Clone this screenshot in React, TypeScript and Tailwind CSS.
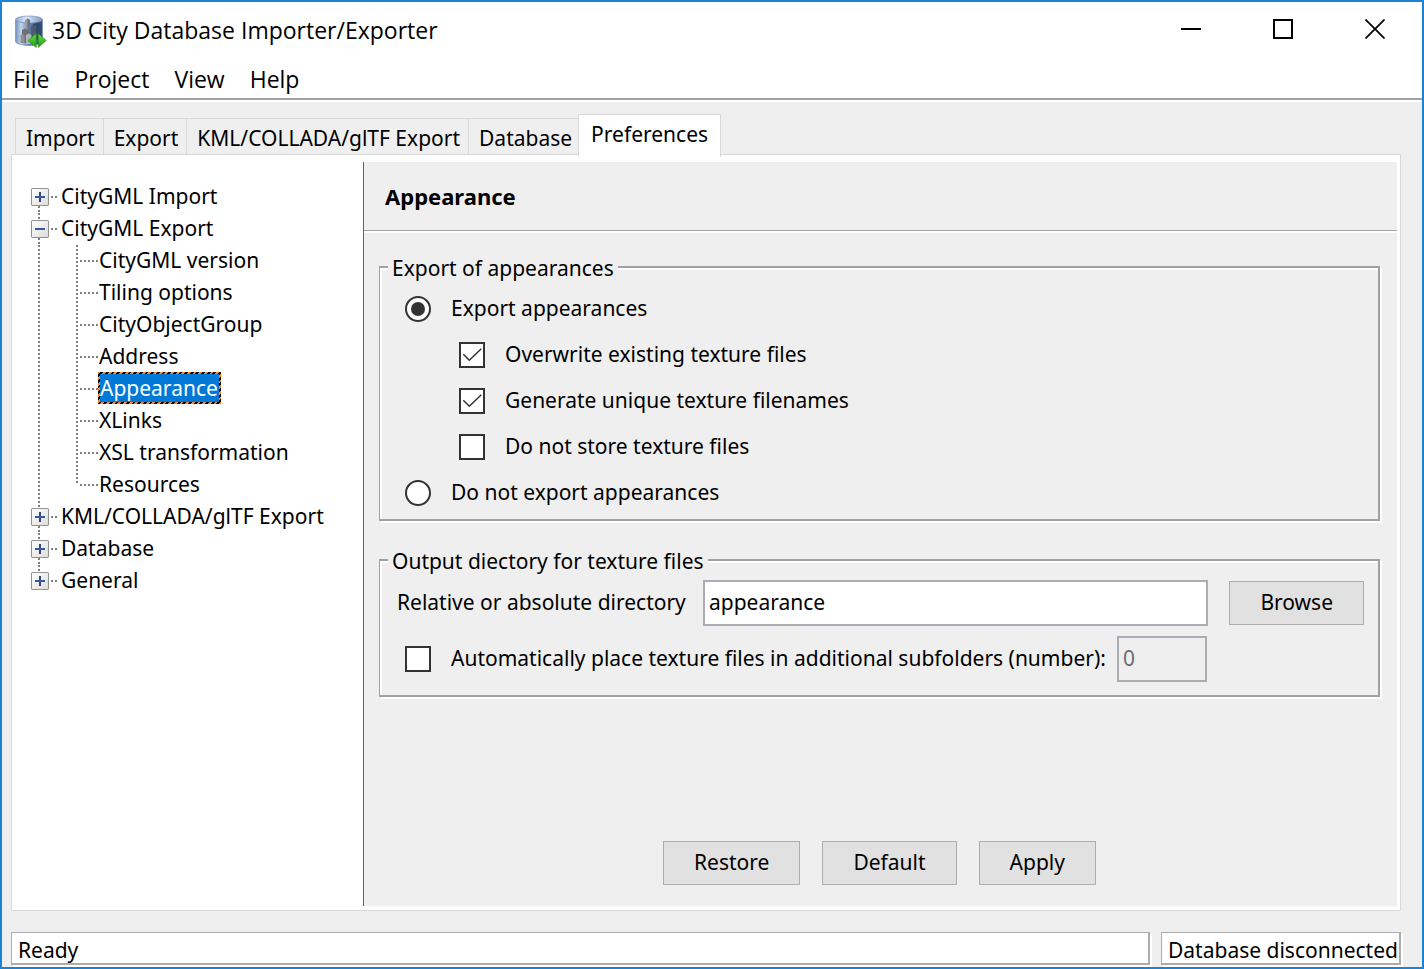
import { useState, type ReactNode } from "react";

const dotsY = "bg-[repeating-linear-gradient(to_bottom,#808080_0_2px,transparent_2px_4px)]";
const dotsX = "bg-[repeating-linear-gradient(to_right,#808080_0_2px,transparent_2px_4px)]";

function Logo() {
  return (
    <svg viewBox="0 0 33 33" className="size-[33px] shrink-0" aria-hidden="true">
      <defs>
        <linearGradient id="body" x1="0" x2="1" y1="0" y2="0">
          <stop offset="0" stopColor="#6f8fbd" />
          <stop offset="0.2" stopColor="#c3d3e8" />
          <stop offset="0.5" stopColor="#6283b3" />
          <stop offset="1" stopColor="#2c4d84" />
        </linearGradient>
        <linearGradient id="lid" x1="0" x2="1" y1="0" y2="0">
          <stop offset="0" stopColor="#8fa9cc" />
          <stop offset="0.4" stopColor="#dfe8f3" />
          <stop offset="1" stopColor="#7d99c2" />
        </linearGradient>
        <linearGradient id="arrow" x1="0" x2="0" y1="0" y2="1">
          <stop offset="0" stopColor="#6fdc45" />
          <stop offset="1" stopColor="#1d9a12" />
        </linearGradient>
      </defs>
      <path d="M1.500 4.500v22c0 2 6 4 13.500 4s13.500-2 13.500-4v-22z" fill="url(#body)" stroke="#7590b8" strokeWidth="0.700" />
      <ellipse cx="15" cy="4.500" rx="13.500" ry="3.500" fill="url(#lid)" stroke="#7590b8" strokeWidth="0.700" />
      <path d="M19 9l5-1.500 3 1.500v16h-8z" fill="#34496b" />
      <path d="M17 11l3-1 2 1v15h-5z" fill="#4b5a72" />
      <path d="M11 5l2.500-1.500L16 5v20h-5z" fill="#9a9da2" />
      <path d="M13.500 3.500L16 5v20h-2.500z" fill="#6d727a" />
      <path d="M8 15l3-1.500 3 1.500v13H8z" fill="#6b7079" />
      <path d="M6.500 20l2-1 2 1v8h-4z" fill="#8d9197" />
      <path d="M12 20l3-1.500 2.500 1.500v9H12z" fill="#b0b3b8" />
      <path d="M22.200 18.500v14L14 25.500z" fill="url(#arrow)" stroke="#198f10" strokeWidth="0.600" />
      <path d="M24.200 18.500v14l8.100-7z" fill="url(#arrow)" stroke="#198f10" strokeWidth="0.600" />
    </svg>
  );
}

function WindowButton({ label, children }: { label: string; children: ReactNode }) {
  return (
    <button type="button" aria-label={label} className="flex h-[54px] w-[92px] items-center justify-center">
      <svg viewBox="0 0 20 20" className="size-5" fill="none" stroke="#000" strokeWidth="2" aria-hidden="true">
        {children}
      </svg>
    </button>
  );
}

function Expander({ open, label }: { open: boolean; label: string }) {
  return (
    <button
      type="button"
      aria-label={label}
      className="flex size-[18px] shrink-0 items-center justify-center rounded-[1px] border border-[#919191] bg-linear-to-br from-white to-[#dcdcdc]"
    >
      <svg viewBox="0 0 10 10" className="size-[10px]" stroke="#3c56a0" strokeWidth="2" aria-hidden="true">
        {!open && <path d="M5 0v10" stroke="#34457e" />}
        <path d="M0 5h10" />
      </svg>
    </button>
  );
}

type Node = { label: string; children?: string[] };

const tree: Node[] = [
  { label: "CityGML Import" },
  {
    label: "CityGML Export",
    children: [
      "CityGML version",
      "Tiling options",
      "CityObjectGroup",
      "Address",
      "Appearance",
      "XLinks",
      "XSL transformation",
      "Resources",
    ],
  },
  { label: "KML/COLLADA/glTF Export" },
  { label: "Database" },
  { label: "General" },
];

function Tree() {
  const [selected, setSelected] = useState("Appearance");
  return (
    <ul className="pt-[26px] pl-[19px]">
      {tree.map((node, i) => {
        const first = i === 0;
        const last = i === tree.length - 1;
        return (
          <li key={node.label}>
            <div className="flex h-8 items-center">
              <div className="flex h-8 w-[18px] flex-col">
                <span className={`ml-[7px] w-[2px] flex-1 ${first ? "" : dotsY}`} />
                <Expander open={!!node.children} label={`Toggle ${node.label}`} />
                <span className={`ml-[7px] w-[2px] flex-1 ${last ? "" : dotsY}`} />
              </div>
              <span className={`ml-[2px] h-[2px] w-[6px] ${dotsX}`} />
              <button type="button" className="ml-1 pb-[2px] whitespace-nowrap">
                {node.label}
              </button>
            </div>
            {node.children && (
              <ul>
                {node.children.map((child, j) => (
                  <li key={child} className="flex h-8 items-center">
                    <span className={`ml-[7px] h-8 w-[2px] ${dotsY}`} />
                    <span
                      className={`ml-[36px] w-[2px] self-start ${dotsY} ${j === node.children!.length - 1 ? "h-4" : "h-8"}`}
                    />
                    <span className={`ml-[2px] h-[2px] w-[18px] ${dotsX}`} />
                    <button
                      type="button"
                      onClick={() => setSelected(child)}
                      className={`mb-[2px] flex h-8 items-center whitespace-nowrap ${
                        child === selected
                          ? "bg-[repeating-linear-gradient(135deg,#ff8728_0_2px,#000_2px_4px)] p-[2px] text-white"
                          : "pl-px"
                      }`}
                    >
                      {child === selected ? (
                        <span className="flex h-7 items-center bg-[#0078d7] pr-px">{child}</span>
                      ) : (
                        child
                      )}
                    </button>
                  </li>
                ))}
              </ul>
            )}
          </li>
        );
      })}
    </ul>
  );
}

function Check({ label, checked = false }: { label: string; checked?: boolean }) {
  return (
    <label className="flex items-center gap-5 whitespace-nowrap">
      <span className="grid size-[26px] shrink-0">
        <input
          type="checkbox"
          defaultChecked={checked}
          className="peer col-start-1 row-start-1 size-[26px] appearance-none border-2 border-[#333] bg-white"
        />
        <svg
          viewBox="0 0 26 26"
          className="pointer-events-none col-start-1 row-start-1 hidden size-[26px] peer-checked:block"
          fill="none"
          stroke="#333"
          strokeWidth="1.500"
          aria-hidden="true"
        >
          <path d="M4.300 12.300l6 6L22.300 6.700" />
        </svg>
      </span>
      <span className="pb-[2px]">{label}</span>
    </label>
  );
}

function Radio({ label, checked = false }: { label: string; checked?: boolean }) {
  return (
    <label className="flex h-[46px] items-center gap-5">
      <input
        type="radio"
        name="export-mode"
        defaultChecked={checked}
        className="grid size-[26px] shrink-0 appearance-none place-items-center rounded-full border-2 border-[#333] bg-white before:size-3.5 before:rounded-full checked:before:bg-[#333]"
      />
      <span className="pb-[2px]">{label}</span>
    </label>
  );
}

function Group({ title, children }: { title: string; children: ReactNode }) {
  return (
    <fieldset className="min-w-0 border-2 border-l border-[#a0a0a0] shadow-[2px_2px_0_#fff,inset_2px_2px_0_#fff]">
      <legend className="ml-2 h-6 bg-[#efefef] px-1 leading-[26px]">{title}</legend>
      {children}
    </fieldset>
  );
}

function PushButton({ children }: { children: ReactNode }) {
  return (
    <button type="button" className="h-11 shrink-0 border border-[#adadad] bg-[#e1e1e1] px-[30px] pb-[2px]">
      {children}
    </button>
  );
}

export default function App() {
  return (
    <div className="flex min-h-screen flex-col border-2 border-[#1883d7] bg-[#efefef] font-['Noto_Sans',sans-serif] text-[21px] leading-7 text-black">
      <header className="border-b-2 border-[#a0a0a0] bg-white font-['Open_Sans',sans-serif] text-[23px]">
        <div className="flex h-[58px] items-center pl-3">
          <Logo />
          <h1 className="ml-[5px] flex-1 pb-[2px]">3D City Database Importer/Exporter</h1>
          <div className="flex self-start pr-px">
            <WindowButton label="Minimize">
              <path d="M0 10h20" />
            </WindowButton>
            <WindowButton label="Maximize">
              <path d="M1 1h18v18H1z" />
            </WindowButton>
            <WindowButton label="Close">
              <path d="M0.500 0.500l19 19M19.500 0.500l-19 19" strokeWidth="1.700" />
            </WindowButton>
          </div>
        </div>
        <nav className="flex h-[38px] items-center gap-[25px] pl-[11px]">
          <button type="button">File</button>
          <button type="button">Project</button>
          <button type="button">View</button>
          <button type="button">Help</button>
        </nav>
      </header>

      <main className="flex flex-1 flex-col border-t-2 border-white pt-3 pr-[21px] pl-[9px]">
        <div role="tablist" className="flex items-end pl-1 whitespace-nowrap">
          {["Import", "Export", "KML/COLLADA/glTF Export", "Database"].map((tab) => (
            <button
              key={tab}
              type="button"
              role="tab"
              aria-selected="false"
              className="h-9 border-t border-l border-[#d9d9d9] pt-[3px] pr-2 pl-[10px]"
            >
              {tab}
            </button>
          ))}
          <button
            type="button"
            role="tab"
            aria-selected="true"
            className="relative -mb-[3px] -ml-[2px] h-[43px] border border-b-0 border-[#d9d9d9] bg-white px-3 pb-1"
          >
            Preferences
          </button>
        </div>

        <div className="flex flex-1 border border-[#d9d9d9] bg-white pr-[3px] pb-1">
          <aside className="w-[351px] shrink-0">
            <Tree />
          </aside>
          <section className="mt-[7px] flex min-w-0 flex-1 flex-col border-l border-[#646464] bg-[#efefef]">
            <div className="border-b-2 border-white">
              <h2 className="flex h-[69px] items-center border-b border-[#a0a0a0] pl-[21px] text-[22px] font-bold">
                Appearance
              </h2>
            </div>
            <div className="flex flex-1 flex-col gap-[27px] pt-[22px] pr-[17px] pb-[21px] pl-[15px]">
              <Group title="Export of appearances">
                <div className="pt-[7px] pb-[3px] pl-[25px]">
                  <Radio label="Export appearances" checked />
                  <div className="pl-[54px]">
                    <div className="flex h-[46px] items-center">
                      <Check label="Overwrite existing texture files" checked />
                    </div>
                    <div className="flex h-[46px] items-center">
                      <Check label="Generate unique texture filenames" checked />
                    </div>
                    <div className="flex h-[46px] items-center">
                      <Check label="Do not store texture files" />
                    </div>
                  </div>
                  <Radio label="Do not export appearances" />
                </div>
              </Group>

              <Group title="Output diectory for texture files">
                <div className="pt-2 pr-[14px] pb-[13px] pl-[17px]">
                  <div className="flex items-center">
                    <label htmlFor="directory" className="w-[306px] shrink-0 pb-[2px]">
                      Relative or absolute directory
                    </label>
                    <input
                      id="directory"
                      type="text"
                      defaultValue="appearance"
                      className="mr-[21px] h-[46px] min-w-0 flex-1 border-2 border-[#abadb3] bg-white px-1 pb-[2px]"
                    />
                    <PushButton>Browse</PushButton>
                  </div>
                  <div className="flex items-center justify-between pt-[10px] pr-[157px] pl-2">
                    <Check label="Automatically place texture files in additional subfolders (number):" />
                    <input
                      type="text"
                      aria-label="Number of subfolders"
                      defaultValue="0"
                      disabled
                      className="h-[46px] w-[90px] border-2 border-[#abadb3] bg-[#efefef] px-1 pb-[2px] text-[#6d6d6d]"
                    />
                  </div>
                </div>
              </Group>

              <div className="mt-auto flex justify-center gap-[22px]">
                <PushButton>Restore</PushButton>
                <PushButton>Default</PushButton>
                <PushButton>Apply</PushButton>
              </div>
            </div>
          </section>
        </div>

        <footer className="mt-[21px] mb-[2px] flex gap-[11px] whitespace-nowrap">
          <div className="h-[33px] flex-1 border-t border-r-2 border-b-2 border-l border-[#adadad] bg-white px-[6px] pt-[3px] shadow-[2px_2px_0_#fff]">
            Ready
          </div>
          <div className="h-[33px] w-[240px] border-t border-r-2 border-b-2 border-l border-[#adadad] bg-white px-[6px] pt-[3px] shadow-[2px_2px_0_#fff]">
            Database disconnected
          </div>
        </footer>
      </main>
    </div>
  );
}
